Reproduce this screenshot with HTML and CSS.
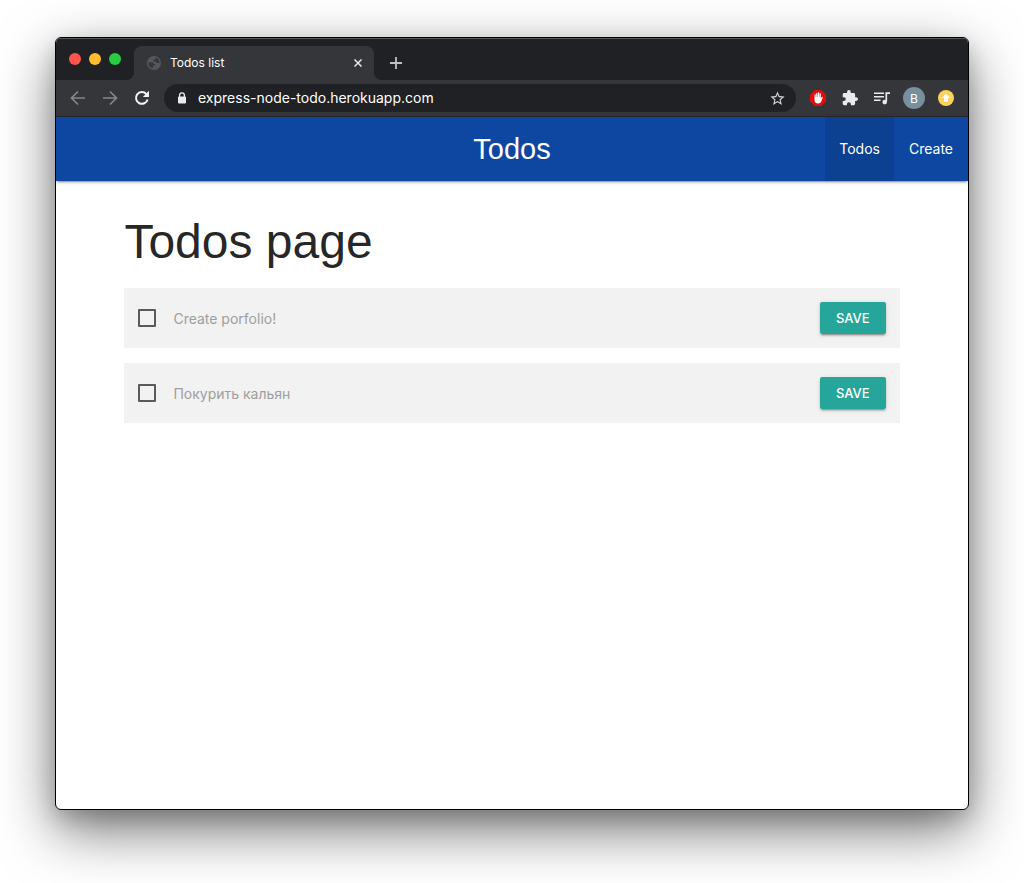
FILE: index.html
```html
<!DOCTYPE html>
<html lang="en">
<head>
<meta charset="utf-8">
<meta name="viewport" content="width=device-width, initial-scale=1">
<title>Todos list</title>
<link rel="stylesheet" href="styles.css">
</head>
<body>
<div class="window">
  <header class="chrome">
    <div class="tabstrip">
      <div class="lights">
        <button class="light light-close" aria-label="Close window"></button>
        <button class="light light-min" aria-label="Minimize window"></button>
        <button class="light light-max" aria-label="Maximize window"></button>
      </div>
      <div class="tab">
        <svg class="globe" viewBox="0 0 14 14" width="14" height="14" aria-hidden="true"><circle cx="7" cy="7" r="7" fill="#54575b"/><path d="M1.500 6.200h3.300c1.300 0 2 .7 2 1.700h1.300v1.700H5.900v2.600A5.600 5.600 0 0 1 1.500 6.200zM8.600 1.600v.9c0 .9-.6 1.200-1.500 1.200H6.200v1.500h1.500c.9 0 1.300.7 1.300 1.500h1.600c.9 0 1.500.5 1.700 1.200A5.600 5.600 0 0 0 8.600 1.600z" fill="#35363a"/></svg>
        <span class="tab-title">Todos list</span>
        <button class="icon-btn tab-close" aria-label="Close tab"><svg viewBox="0 0 8 8" width="8" height="8"><path d="M.5.5l7 7M7.500.5l-7 7" stroke="#e8eaed" stroke-width="1.500"/></svg></button>
      </div>
      <button class="icon-btn new-tab" aria-label="New tab"><svg viewBox="0 0 12 12" width="12" height="12"><path d="M6 0v12M0 6h12" stroke="#bdc1c6" stroke-width="1.800"/></svg></button>
    </div>
    <div class="toolbar">
      <div class="nav-buttons">
        <button class="icon-btn" aria-label="Back"><svg viewBox="0 0 16 16" width="16" height="16"><path d="M15 8H2M8 1.500 1.500 8 8 14.500" fill="none" stroke="#85878b" stroke-width="1.700"/></svg></button>
        <button class="icon-btn" aria-label="Forward"><svg viewBox="0 0 16 16" width="16" height="16"><path d="M1 8h13M8 1.500 14.500 8 8 14.500" fill="none" stroke="#85878b" stroke-width="1.700"/></svg></button>
        <button class="icon-btn" aria-label="Reload"><svg viewBox="0 0 16 16" width="16" height="16"><path d="M13.600 9.400A5.900 5.900 0 1 1 12.300 4" fill="none" stroke="#f1f3f4" stroke-width="2"/><path d="M15 .8v6.200H8.800z" fill="#f1f3f4"/></svg></button>
      </div>
      <div class="address">
        <svg viewBox="0 0 10 12" width="10" height="12" aria-hidden="true"><path d="M2.600 5V3.200a2.400 2.400 0 0 1 4.800 0V5" fill="none" stroke="#e8eaed" stroke-width="1.300"/><rect x="1" y="4.500" width="8" height="7" rx="1" fill="#e8eaed"/></svg>
        <input class="url" type="text" aria-label="Address" value="express-node-todo.herokuapp.com">
        <button class="icon-btn" aria-label="Bookmark"><svg viewBox="0 0 24 24" width="17" height="17"><path d="M22 9.240l-7.190-.62L12 2 9.190 8.630 2 9.240l5.460 4.730L5.820 21 12 17.270 18.180 21l-1.630-7.030L22 9.240zM12 15.400l-3.760 2.270 1-4.280-3.320-2.880 4.380-.38L12 6.100l1.710 4.040 4.380.38-3.320 2.880 1 4.280L12 15.400z" fill="#d2d4d7"/></svg></button>
      </div>
      <div class="extensions">
        <button class="icon-btn" aria-label="Ad blocker"><svg viewBox="0 0 16 16" width="16" height="16"><path d="M4.700 0h6.600L16 4.700v6.600L11.300 16H4.700L0 11.300V4.700z" fill="#e40d0d"/><path d="M4.500 8.200V4.600q.6-.9 1.200 0V7h.5V3.200q.7-.9 1.300 0v3.600h.4V2.600q.7-.8 1.300 0v4.200h.4V3.500q.7-.8 1.200 0v5.100l.9-1.500q.8-.6 1.100.2l-1.600 4.500Q10.400 13.600 8 13.500 4.500 13.200 4.500 10z" fill="#fff"/></svg></button>
        <button class="icon-btn" aria-label="Extensions"><svg viewBox="1 1 22 22" width="16" height="16"><path d="M20.500 11H19V7a2 2 0 0 0-2-2h-4V3.500a2.500 2.500 0 0 0-5 0V5H4a2 2 0 0 0-2 2v3.800h1.500a2.700 2.700 0 0 1 0 5.400H2V20a2 2 0 0 0 2 2h3.800v-1.500a2.700 2.700 0 0 1 5.400 0V22H17a2 2 0 0 0 2-2v-4h1.500a2.500 2.500 0 0 0 0-5z" fill="#e8eaed"/></svg></button>
        <button class="icon-btn" aria-label="Media controls"><svg viewBox="0 0 16 13" width="16" height="13"><path d="M0 1.200h10M0 4.700h10M0 8.200h6.500" stroke="#e8eaed" stroke-width="1.600"/><path d="M12.300 9.500V1.200H16" fill="none" stroke="#e8eaed" stroke-width="1.700"/><circle cx="10.700" cy="10.100" r="2.300" fill="#e8eaed"/></svg></button>
        <button class="avatar" aria-label="Profile B">B</button>
        <button class="icon-btn" aria-label="Update available"><svg viewBox="0 0 16 16" width="16" height="16"><circle cx="8" cy="8" r="8" fill="#fdd05b"/><path d="M8 3.500 12.200 8H10v3.800H6V8H3.800z" fill="#fff"/></svg></button>
      </div>
    </div>
  </header>
  <nav class="navbar">
    <a class="brand" href="#">Todos</a>
    <div class="links">
      <a class="link link-active" href="#">Todos</a>
      <a class="link" href="#">Create</a>
    </div>
  </nav>
  <main class="container">
    <h1 class="title">Todos page</h1>
    <form class="todo">
      <label class="todo-label"><input class="check" type="checkbox"><span>Create porfolio!</span></label>
      <button class="save" type="button">SAVE</button>
    </form>
    <form class="todo">
      <label class="todo-label"><input class="check" type="checkbox"><span lang="ru">Покурить кальян</span></label>
      <button class="save" type="button">SAVE</button>
    </form>
  </main>
</div>
</body>
</html>
```
FILE: styles.css
```css
* {
  box-sizing: border-box;
}

body {
  margin: 0;
  min-height: 100vh;
  display: flex;
  padding: 37px 55px 73px;
  background: #fff;
  font-family: Inter, "Liberation Sans", sans-serif;
  font-size: 14px;
}

button,
input {
  font-family: inherit;
  margin: 0;
}

a {
  color: inherit;
  text-decoration: none;
}

svg {
  display: block;
  flex: none;
}

.window {
  flex: 1;
  min-width: 0;
  display: flex;
  flex-direction: column;
  border: 1px solid #000;
  border-radius: 6px;
  background: #fff;
  overflow: hidden;
  box-shadow: 0 20px 56px rgba(0, 0, 0, 0.55), 0 8px 20px rgba(0, 0, 0, 0.16);
}

/* Browser frame */
.chrome {
  background: #202124;
  color: #fff;
  border-bottom: 1px solid #28292c;
}

.tabstrip {
  display: flex;
  height: 42px;
  padding-top: 8px;
  box-shadow: inset 0 1px #55575a;
}

.lights {
  display: flex;
  gap: 8px;
  width: 78px;
  padding: 7px 13px;
}

.light {
  width: 12px;
  height: 12px;
  padding: 0;
  border: 0;
  border-radius: 50%;
}

.light-close { background: #ff544d; }
.light-min { background: #ffbd2e; }
.light-max { background: #28cd41; }

.tab {
  position: relative;
  display: flex;
  align-items: center;
  gap: 9px;
  width: 240px;
  padding: 0 12px 0 13px;
  border-radius: 8px 8px 0 0;
  background: #35363a;
}

.tab::before,
.tab::after {
  content: "";
  position: absolute;
  bottom: 0;
  width: 8px;
  height: 8px;
}

.tab::before {
  right: 100%;
  background: radial-gradient(circle at 0 0, transparent 8px, #35363a 8px);
}

.tab::after {
  left: 100%;
  background: radial-gradient(circle at 100% 0, transparent 8px, #35363a 8px);
}

.tab-title {
  flex: 1;
  font-size: 12px;
  line-height: 14px;
  padding-bottom: 1px;
}

.icon-btn {
  display: flex;
  align-items: center;
  justify-content: center;
  padding: 0;
  border: 0;
  background: none;
}

.new-tab {
  width: 44px;
}

.toolbar {
  display: flex;
  align-items: center;
  height: 36px;
  padding: 0 14px;
  background: #35363a;
}

.nav-buttons {
  display: flex;
  gap: 16px;
  padding-right: 14px;
}

.address {
  flex: 1;
  display: flex;
  align-items: center;
  height: 28px;
  padding: 0 10px 0 13px;
  border-radius: 14px;
  background: #202124;
}

.url {
  flex: 1;
  min-width: 0;
  padding: 0 0 2px 11px;
  border: 0;
  outline: 0;
  background: none;
  color: #fff;
  font-size: 14px;
}

.extensions {
  display: flex;
  align-items: center;
  gap: 16px;
  padding-left: 14px;
}

.avatar {
  width: 22px;
  height: 22px;
  margin: 0 -3px;
  padding: 0;
  border: 0;
  border-radius: 50%;
  background: #78909c;
  color: #fff;
  font-size: 12px;
}

/* Page */
.navbar {
  display: grid;
  grid-template-columns: 1fr auto 1fr;
  height: 64px;
  background: #0d47a1;
  color: #fff;
  box-shadow: 0 2px 2px rgba(0, 0, 0, 0.14), 0 1px 5px rgba(0, 0, 0, 0.12), 0 3px 1px -2px rgba(0, 0, 0, 0.2);
}

.brand {
  grid-column: 2;
  font-family: "Liberation Sans", Arial, sans-serif;
  font-size: 29px;
  line-height: 64px;
}

.links {
  display: flex;
  justify-content: flex-end;
}

.link {
  padding: 0 15px;
  line-height: 64px;
}

.link-active {
  padding: 0 14px;
  background: #0c4091;
}

.container {
  width: 85%;
  margin: 0 auto;
}

.title {
  margin: 33px 0 18px;
  color: rgba(0, 0, 0, 0.87);
  font-family: "Liberation Sans", Arial, sans-serif;
  font-size: 48px;
  font-weight: 400;
  line-height: 56px;
}

.todo {
  display: flex;
  align-items: center;
  justify-content: space-between;
  margin-bottom: 15px;
  padding: 14px;
  background: #f2f2f2;
}

.todo-label {
  display: flex;
  align-items: center;
  gap: 17px;
  color: #9e9e9e;
}

.check {
  appearance: none;
  width: 18px;
  height: 18px;
  border: 2px solid #5a5a5a;
  border-radius: 1px;
}

.check:checked {
  background: #26a69a;
}

.save {
  height: 32px;
  padding: 0 16px;
  border: 0;
  border-radius: 2px;
  background: #26a69a;
  color: #fff;
  font-size: 13px;
  font-weight: 500;
  box-shadow: 0 2px 2px rgba(0, 0, 0, 0.14), 0 1px 5px rgba(0, 0, 0, 0.12), 0 3px 1px -2px rgba(0, 0, 0, 0.2);
}
```
